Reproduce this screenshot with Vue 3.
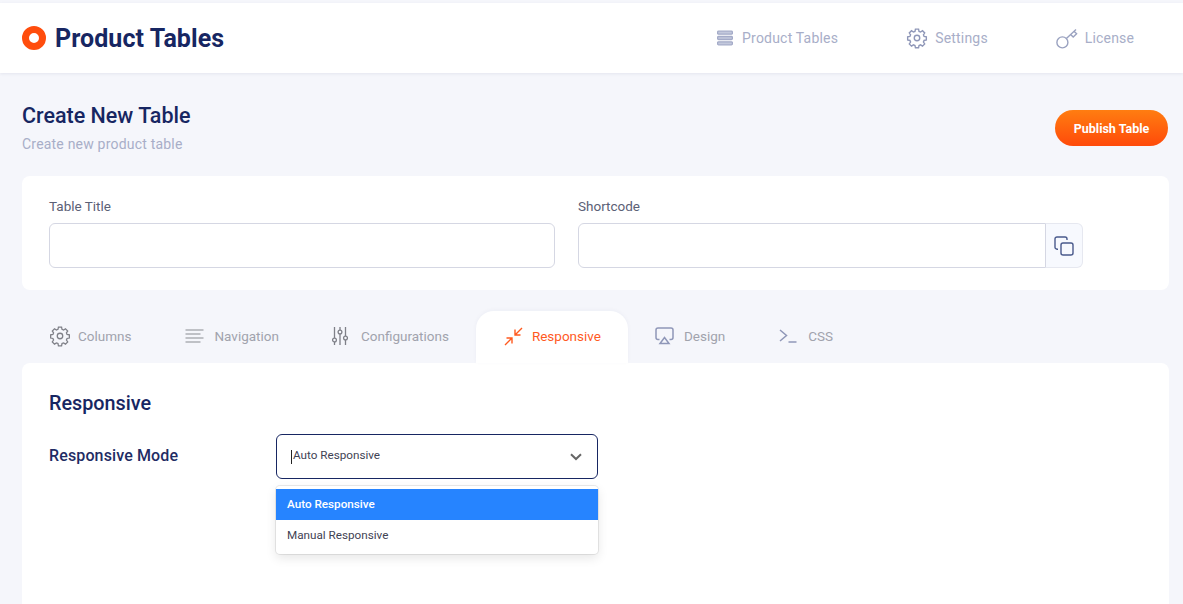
<template>
  <div class="page">
    <header class="topbar">
      <div class="brand">
        <span class="brandmark"></span>
        <span class="brandname">Product Tables</span>
      </div>
      <nav class="topnav">
        <a class="navitem nav1">
          <svg width="16" height="16" viewBox="0 0 16 16" fill="none" stroke="#a4abc8" stroke-width="1.3">
            <rect x="0.6" y="1.2" width="14.8" height="3" rx="1" fill="#c3c8dc" />
            <rect x="0.6" y="6.5" width="14.8" height="3" rx="1" fill="#c3c8dc" />
            <rect x="0.6" y="11.8" width="14.8" height="3" rx="1" fill="#c3c8dc" />
          </svg>
          <span>Product Tables</span>
        </a>
        <a class="navitem nav2">
          <svg width="22" height="22" viewBox="0 0 24 24" fill="none" stroke="#8f97b8" stroke-width="1.5">
            <circle cx="12" cy="12" r="3" />
            <path :d="gearPath" />
          </svg>
          <span>Settings</span>
        </a>
        <a class="navitem nav3">
          <svg width="22" height="22" viewBox="0 0 22 22" fill="none" stroke="#9aa2c0" stroke-width="1.4">
            <circle cx="6.4" cy="15.4" r="5.5" />
            <path d="M10.4 11.4 L20 2.4 M14.6 7.4 L17.2 10 L20.6 6.8 L18 4.2" />
          </svg>
          <span>License</span>
        </a>
      </nav>
    </header>

    <section class="heading">
      <div>
        <h1>Create New Table</h1>
        <p>Create new product table</p>
      </div>
      <button class="publish">Publish Table</button>
    </section>

    <section class="card formcard">
      <div class="field title">
        <label>Table Title</label>
        <input type="text" />
      </div>
      <div class="field shortcode">
        <label>Shortcode</label>
        <div class="inputgroup">
          <input type="text" />
          <span class="copybtn">
            <svg width="20" height="20" viewBox="0 0 20 20" fill="none" stroke="#4a5a8c" stroke-width="1.4">
              <rect x="7" y="7" width="12" height="12" rx="2" />
              <path d="M4 13.2 H3 a2 2 0 0 1 -2 -2 V3 a2 2 0 0 1 2 -2 h8 a2 2 0 0 1 2 2 v1" />
            </svg>
          </span>
        </div>
      </div>
    </section>

    <div class="tabs">
      <a v-for="t in tabs" :key="t.name" class="tab" :class="[t.cls, { active: t.name === 'Responsive' }]">
        <svg v-if="t.name === 'Columns'" width="22" height="22" viewBox="0 0 24 24" fill="none" stroke="#7f8088" stroke-width="1.4">
          <circle cx="12" cy="12" r="3" />
          <path :d="gearPath" />
        </svg>
        <svg v-else-if="t.name === 'Navigation'" width="19" height="14" viewBox="0 0 19 14" fill="none" stroke="#8a8b92" stroke-width="1.2">
          <path d="M0.5 1h18 M0.5 5h15 M0.5 9h18 M0.5 13h15" />
        </svg>
        <svg v-else-if="t.name === 'Configurations'" width="16" height="20" viewBox="0 0 16 20" fill="none" stroke="#7f8088" stroke-width="1.3">
          <path d="M2.5 1v11 M2.5 16v3 M8 1v3 M8 8v11 M13.5 1v9 M13.5 14v5" />
          <circle cx="2.5" cy="14" r="1.9" />
          <circle cx="8" cy="6" r="1.9" />
          <circle cx="13.5" cy="12" r="1.9" />
        </svg>
        <svg v-else-if="t.name === 'Responsive'" width="19" height="19" viewBox="0 0 19 19" fill="none" stroke="#ff5a1f" stroke-width="1.4">
          <path d="M18 1 L11 8 M11 2.5 V8 H16.5 M1 18 L8 11 M2.5 11 H8 V16.5" />
        </svg>
        <svg v-else-if="t.name === 'Design'" width="19" height="18" viewBox="0 0 19 18" fill="none" stroke="#8f97b8" stroke-width="1.5">
          <path d="M4.5 12.5 H3 a2 2 0 0 1 -2 -2 V3 a2 2 0 0 1 2 -2 h13 a2 2 0 0 1 2 2 v7.5 a2 2 0 0 1 -2 2 h-1.5" />
          <path d="M9.5 10.5 L14 16.5 H5 Z" />
        </svg>
        <svg v-else width="18" height="14" viewBox="0 0 18 14" fill="none" stroke="#8f97b8" stroke-width="1.5">
          <path d="M1 1 L7.5 6.5 L1 12" />
          <path d="M9.5 13 H17.5" />
        </svg>
        <span>{{ t.name }}</span>
      </a>
    </div>

    <section class="card panel">
      <h2>Responsive</h2>
      <div class="moderow">
        <label class="modelabel">Responsive Mode</label>
        <div class="select">
          <div class="selectbox">
            <span class="caret"></span>
            <span>Auto Responsive</span>
            <svg class="chevron" width="12" height="8" viewBox="0 0 12 8" fill="none" stroke="#666" stroke-width="2">
              <path d="M1 1.2 L6 6 L11 1.2" />
            </svg>
          </div>
          <ul class="menu">
            <li class="selected">Auto Responsive</li>
            <li>Manual Responsive</li>
          </ul>
        </div>
      </div>
    </section>
  </div>
</template>

<script setup>
const gearPath =
  'M10.3 2.3h3.4l.5 2.5 1.7.7 2.1-1.4 2.4 2.4-1.4 2.1.7 1.7 2.5.5v3.4l-2.5.5-.7 1.7 1.4 2.1-2.4 2.4-2.1-1.4-1.7.7-.5 2.5h-3.4l-.5-2.5-1.7-.7-2.1 1.4-2.4-2.4 1.4-2.1-.7-1.7-2.5-.5v-3.4l2.5-.5.7-1.7-1.4-2.1 2.4-2.4 2.1 1.4 1.7-.7z'

const tabs = [
  { name: 'Columns', cls: 't1' },
  { name: 'Navigation', cls: 't2' },
  { name: 'Configurations', cls: 't3' },
  { name: 'Responsive', cls: 't4' },
  { name: 'Design', cls: 't5' },
  { name: 'CSS', cls: 't6' }
]
</script>

<style>
html, body {
  margin: 0;
  background: #f5f6fb;
  overflow: hidden;
}
</style>

<style scoped>
.page {
  height: 604px;
  overflow: hidden;
  padding-top: 3px;
  box-sizing: border-box;
  background: #f5f6fb;
  font-family: Roboto, "Liberation Sans", sans-serif;
}

.topbar {
  height: 70px;
  background: #fff;
  box-shadow: 0 1px 3px rgba(30, 40, 90, 0.08);
  display: flex;
  align-items: center;
  justify-content: space-between;
  padding-left: 22px;
}

.brand {
  display: flex;
  align-items: center;
}

.brandmark {
  width: 24px;
  height: 24px;
  box-sizing: border-box;
  border: 7px solid #ff4d0d;
  border-radius: 50%;
  background: #fff;
  margin-right: 9px;
}

.brandname {
  font-size: 25px;
  font-weight: 700;
  letter-spacing: 0.07px;
  color: #172662;
}

.topnav {
  display: flex;
  align-items: center;
}

.navitem {
  display: flex;
  align-items: center;
  font-size: 14px;
  letter-spacing: 0.2px;
  color: #a8aec8;
}

.nav1 svg {
  margin-right: 9px;
}

.nav2 {
  margin-left: 68px;
}

.nav2 svg {
  margin-right: 7px;
}

.nav3 {
  margin-left: 68px;
  margin-right: 49px;
  letter-spacing: 0.15px;
}

.nav3 svg {
  margin-right: 7px;
}

.heading {
  display: flex;
  justify-content: space-between;
  align-items: center;
  padding: 29px 15px 0 22px;
}

.heading h1 {
  margin: 0;
  font-size: 21.5px;
  line-height: 28px;
  font-weight: 500;
  color: #172662;
}

.heading p {
  margin: 5px 0 0;
  font-size: 14px;
  line-height: 18px;
  letter-spacing: 0.2px;
  color: #a8aec8;
}

.publish {
  width: 113px;
  height: 36px;
  border: 0;
  padding: 1px 0 0;
  border-radius: 18px;
  background: linear-gradient(180deg, #ff7d11, #ff4a0a);
  color: #fff;
  font: 700 12.5px Roboto, sans-serif;
}

.card {
  background: #fff;
  margin: 0 14px 0 22px;
  border-radius: 8px;
}

.formcard {
  margin-top: 23px;
  height: 114px;
  box-sizing: border-box;
  padding: 20px 27px 0;
  display: flex;
}

.field label {
  display: block;
  font-size: 13.5px;
  line-height: 20px;
  color: #5b6076;
  margin-bottom: 7px;
}

.field input {
  display: block;
  height: 45px;
  box-sizing: border-box;
  border: 1px solid #d5d7e3;
  border-radius: 6px;
  background: #fff;
  outline: none;
  padding: 0 12px;
}

.title input {
  width: 506px;
}

.shortcode {
  margin-left: 23px;
}

.inputgroup {
  display: flex;
}

.shortcode input {
  width: 468px;
  border-radius: 6px 0 0 6px;
}

.copybtn {
  width: 37px;
  height: 45px;
  box-sizing: border-box;
  border: 1px solid #e6e8f0;
  border-left: 0;
  border-radius: 0 6px 6px 0;
  background: #f7f9fe;
  display: flex;
  align-items: center;
  justify-content: center;
}

.tabs {
  display: flex;
  margin: 21px 0 0 22px;
  height: 52px;
}

.tab {
  display: flex;
  align-items: center;
  font-size: 13.5px;
  color: #a1a3ad;
  padding-bottom: 2px;
  box-sizing: border-box;
}

.tab svg {
  flex: none;
}

.t1 {
  padding-left: 27px;
}

.t1 svg {
  margin-right: 7px;
}

.t2 {
  margin-left: 54px;
}

.t2 svg {
  margin-right: 10px;
}

.t3 {
  margin-left: 53px;
}

.t3 svg {
  margin-right: 13px;
}

.t4 {
  margin-left: 27px;
  width: 152px;
  padding-left: 28px;
  border-radius: 18px 18px 0 0;
}

.t4 svg {
  margin-right: 9px;
}

.t5 {
  margin-left: 27px;
}

.t5 svg {
  margin-right: 10px;
}

.t6 {
  margin-left: 54px;
}

.t6 svg {
  margin-right: 11px;
}

.tab.active {
  background: #fff;
  color: #ff5a1f;
  box-shadow: 0 -1px 4px rgba(30, 40, 90, 0.04);
}

.panel {
  height: 260px;
  padding: 28px 27px 0;
}

.panel h2 {
  margin: 0;
  font-size: 19.8px;
  line-height: 26px;
  font-weight: 500;
  color: #172662;
}

.moderow {
  display: flex;
  margin-top: 17px;
}

.modelabel {
  width: 227px;
  font-size: 16px;
  font-weight: 500;
  letter-spacing: 0.13px;
  line-height: 44px;
  color: #1f2c64;
}

.select {
  width: 322px;
  font-size: 11.7px;
}

.selectbox {
  height: 45px;
  box-sizing: border-box;
  border: 1px solid #172662;
  border-radius: 6px;
  padding: 0 15px 3px 14px;
  display: flex;
  align-items: center;
  color: #3f4354;
  background: #fff;
}

.caret {
  width: 1px;
  height: 14px;
  margin-top: 3px;
  background: #222;
  margin-right: 1px;
}

.chevron {
  margin-left: auto;
  margin-top: 3px;
}

.menu {
  list-style: none;
  margin: 7px 0 0;
  padding: 3px 0;
  border-radius: 4px;
  background: #fff;
  box-shadow: 0 0 0 1px rgba(0, 0, 0, 0.08), 0 4px 11px rgba(0, 0, 0, 0.1);
}

.menu li {
  height: 31px;
  line-height: 30px;
  padding-left: 11px;
  color: #3f4354;
}

.menu li.selected {
  background: #2684ff;
  color: #fff;
  font-weight: 500;
}
</style>
